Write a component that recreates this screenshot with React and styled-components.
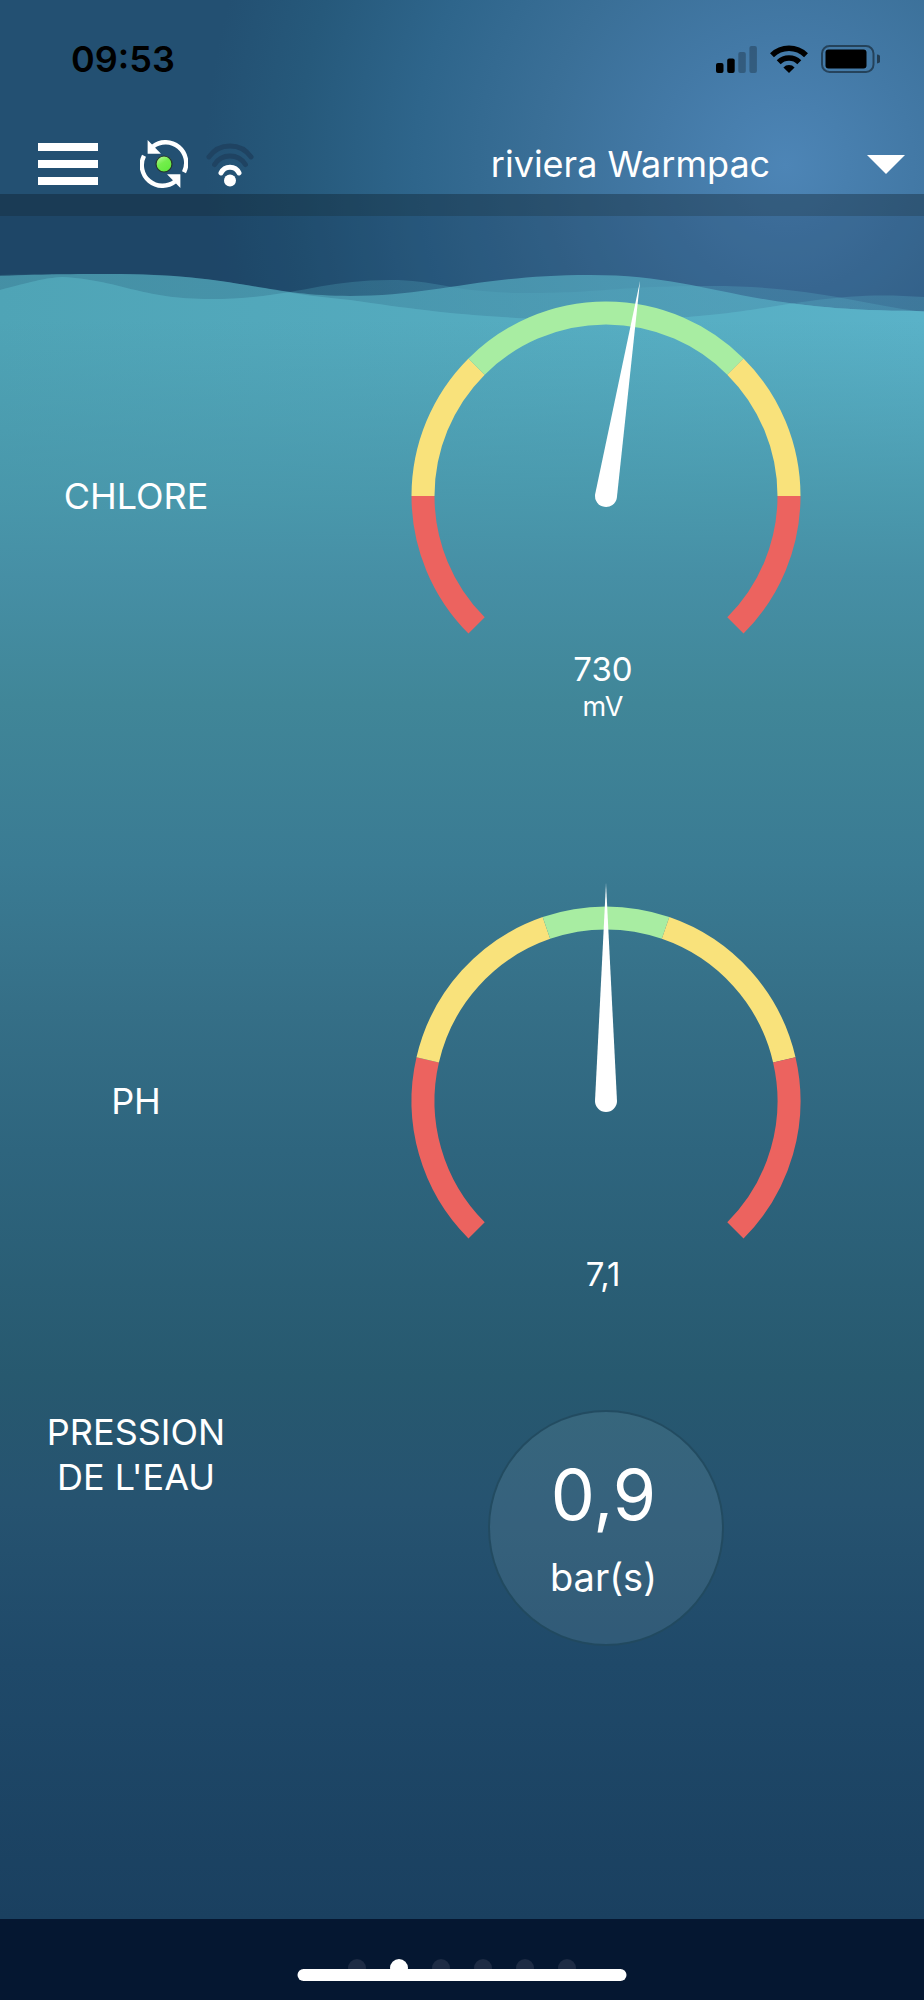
import { useState } from "react";
import styled, { createGlobalStyle } from "styled-components";

const GREEN = "#a8eda2";
const YELLOW = "#f9e27b";
const RED = "#ec635f";

const ARC_RADIUS = 183;

const WAVE_FRONT =
  "M0 2 C50 0 80 0 120 0 C240 1 265 22 350 22 C435 22 480 1 590 1 C710 1 740 38 924 37 V46 H0 Z";
const WAVE_MIDDLE =
  "M0 16 C30 8 45 4 62 3 C120 6 140 25 210 25 C290 25 320 6 390 6 C440 6 450 19 530 19 C600 19 620 12 710 12 C810 12 850 28 924 38 V46 H0 Z";
const WAVE_BACK =
  "M0 1 C60 0 100 0 130 0 C230 2 260 18 350 26 C420 36 460 42 560 46 H640 C730 42 770 32 810 27 C860 20 890 21 924 23 V46 H0 Z";

// angles in degrees, 0 is straight up
const chloreZones = [
  { from: -135, to: -90, color: RED },
  { from: -90, to: -45, color: YELLOW },
  { from: -45, to: 45, color: GREEN },
  { from: 45, to: 90, color: YELLOW },
  { from: 90, to: 135, color: RED },
];

const phZones = [
  { from: -135, to: -77, color: RED },
  { from: -77, to: -19, color: YELLOW },
  { from: -19, to: 19, color: GREEN },
  { from: 19, to: 77, color: YELLOW },
  { from: 77, to: 135, color: RED },
];

function arcPath(from, to) {
  const point = (deg) => {
    const rad = (deg * Math.PI) / 180;
    return `${ARC_RADIUS * Math.sin(rad)} ${-ARC_RADIUS * Math.cos(rad)}`;
  };
  return `M${point(from)} A${ARC_RADIUS} ${ARC_RADIUS} 0 0 1 ${point(to)}`;
}

function Gauge({ label, zones, angle, value, unit, space }) {
  return (
    <Reading $space={space}>
      <GaugeLabel>{label}</GaugeLabel>
      <Measure>
        <GaugeDial viewBox="-218 -218 436 356" aria-hidden="true">
          {zones.map((zone) => (
            <path
              key={zone.from}
              d={arcPath(zone.from, zone.to)}
              fill="none"
              stroke={zone.color}
              strokeWidth="23"
            />
          ))}
          <path
            d="M0 -218 L11 0 A11 11 0 0 1 -11 0 Z"
            fill="#fff"
            transform={`rotate(${angle})`}
          />
        </GaugeDial>
        <GaugeText>
          <GaugeValue>{value}</GaugeValue>
          {unit && <GaugeUnit>{unit}</GaugeUnit>}
        </GaugeText>
      </Measure>
    </Reading>
  );
}

function PhoneStatus() {
  return (
    <StatusBar>
      <Clock>09:53</Clock>
      <StatusIcons>
        <svg width="41" height="27" viewBox="0 0 41 27">
          <rect x="0" y="17" width="7.5" height="10" rx="2" />
          <rect x="11.2" y="12.6" width="7.5" height="14.4" rx="2" />
          <rect x="22.3" y="6" width="7.5" height="21" rx="2" opacity="0.25" />
          <rect x="33.4" y="0" width="7.5" height="27" rx="2" opacity="0.25" />
        </svg>
        <svg width="38" height="28" viewBox="0 0 38 28">
          <g fill="none" stroke="#000" strokeWidth="5.6">
            <path d="M2 10.2 A24.4 24.4 0 0 1 36 10.2" />
            <path d="M8.7 17.2 A14.6 14.6 0 0 1 29.3 17.2" />
          </g>
          <path d="M19 28 L13.4 22.4 A7.9 7.9 0 0 1 24.6 22.4 Z" />
        </svg>
        <svg width="59" height="28" viewBox="0 0 59 28">
          <rect
            x="1"
            y="1"
            width="51.5"
            height="26"
            rx="7.5"
            fill="none"
            stroke="#000"
            strokeOpacity="0.45"
            strokeWidth="2"
          />
          <rect x="4.5" y="4.6" width="41" height="19" rx="3" />
          <path d="M56 9.5 A4.5 4.5 0 0 1 56 18.5 Z" opacity="0.5" />
        </svg>
      </StatusIcons>
    </StatusBar>
  );
}

function SyncIcon() {
  return (
    <svg width="48" height="48" viewBox="-24 -24 48 48" aria-hidden="true">
      <defs>
        <linearGradient id="led" x1="0" y1="0" x2="0.6" y2="1">
          <stop offset="0" stopColor="#c4fba9" />
          <stop offset="0.5" stopColor="#74ee4c" />
          <stop offset="1" stopColor="#62ea3e" />
        </linearGradient>
      </defs>
      {[0, 180].map((turn) => (
        <g key={turn} transform={`rotate(${turn})`}>
          <path
            d="M-11 -17.6 A20.7 20.7 0 0 1 20 8.2"
            fill="none"
            stroke="#fff"
            strokeWidth="4.4"
          />
          <path d="M-16.4 -24 V-10.3 H-3 Z" fill="#fff" />
        </g>
      ))}
      <circle r="8" fill="url(#led)" stroke="#26352f" strokeWidth="1.2" />
    </svg>
  );
}

function SignalIcon() {
  return (
    <svg width="48" height="46" viewBox="-24 -39.5 48 46" aria-hidden="true">
      <g fill="none" strokeWidth="5" strokeLinecap="round">
        <path d="M-21 -23.6 A25.6 25.6 0 0 1 21 -23.6" stroke="#1f4362" />
        <path d="M-15.4 -16 A18.2 18.2 0 0 1 15.4 -16" stroke="#1f4362" />
        <path d="M-9 -7.6 A10 10 0 0 1 9 -7.6" stroke="#fff" />
      </g>
      <circle r="6" fill="#fff" />
    </svg>
  );
}

function Waves() {
  return (
    <WaveStrip viewBox="0 0 924 46" preserveAspectRatio="none" aria-hidden="true">
      <defs>
        <linearGradient id="surface" x1="0" x2="1">
          <stop offset="0" stopColor="#4fa4b6" />
          <stop offset="1" stopColor="#5ab2c8" />
        </linearGradient>
        <clipPath id="clip-front">
          <path d={WAVE_FRONT} />
        </clipPath>
        <clipPath id="clip-middle">
          <path d={WAVE_MIDDLE} />
        </clipPath>
      </defs>
      <path d={WAVE_BACK} fill="url(#surface)" opacity="0.28" />
      <path d={WAVE_MIDDLE} fill="url(#surface)" opacity="0.28" />
      <path d={WAVE_FRONT} fill="url(#surface)" opacity="0.7" />
      <g clipPath="url(#clip-front)">
        <g clipPath="url(#clip-middle)">
          <path d={WAVE_BACK} fill="url(#surface)" />
        </g>
      </g>
    </WaveStrip>
  );
}

export default function App() {
  const [page, setPage] = useState(1);

  return (
    <>
      <GlobalStyle />
      <Screen>
        <PhoneStatus />
        <Toolbar>
          <MenuButton aria-label="Menu">
            <MenuBar />
            <MenuBar />
            <MenuBar />
          </MenuButton>
          <StateIcons>
            <SyncIcon />
            <SignalIcon />
          </StateIcons>
          <Picker>
            <PoolSelect aria-label="Piscine" defaultValue="riviera">
              <option value="riviera">riviera Warmpac</option>
            </PoolSelect>
            <Caret viewBox="0 0 38 19" aria-hidden="true">
              <path d="M0 0 H38 L19 19 Z" fill="#fff" />
            </Caret>
          </Picker>
        </Toolbar>
        <Shade />
        <Pool>
          <Backdrop>
            <Waves />
            <Water />
          </Backdrop>
          <Readings>
            <Gauge
              label="CHLORE"
              zones={chloreZones}
              angle={9}
              value="730"
              unit="mV"
              space={158}
            />
            <Gauge label="PH" zones={phZones} angle={0} value="7,1" space={80} />
            <Reading $space={0}>
              <Label>
                PRESSION
                <br />
                DE L'EAU
              </Label>
              <Measure>
                <Bubble>
                  <BubbleValue>0,9</BubbleValue>
                  <BubbleUnit>bar(s)</BubbleUnit>
                </Bubble>
              </Measure>
            </Reading>
          </Readings>
        </Pool>
        <Footer>
          <Dots>
            {[0, 1, 2, 3, 4, 5].map((index) => (
              <Dot
                key={index}
                $active={index === page}
                aria-label={`Page ${index + 1}`}
                onClick={() => setPage(index)}
              />
            ))}
          </Dots>
          <HomeBar />
        </Footer>
      </Screen>
    </>
  );
}

const GlobalStyle = createGlobalStyle`
  body {
    margin: 0;
    background: #051731;
  }

  * {
    box-sizing: border-box;
  }

  svg {
    display: block;
    flex-shrink: 0;
  }
`;

const Screen = styled.div`
  min-height: 100vh;
  display: flex;
  flex-direction: column;
  color: #fff;
  font-family: Inter, "Liberation Sans", sans-serif;
  background: radial-gradient(
    circle 580px at 85% 165px,
    #4d85b6 0%,
    #4379a6 22%,
    #3a6f97 42%,
    #2e658b 64%,
    #26597b 84%,
    #235072 100%
  );
`;

const StatusBar = styled.div`
  height: 118px;
  padding: 0 44px 0 71px;
  display: flex;
  align-items: center;
  justify-content: space-between;
  color: #000;
`;

const Clock = styled.span`
  font-size: 36px;
  font-weight: 600;
`;

const StatusIcons = styled.div`
  display: flex;
  align-items: center;
  gap: 13px;
`;

const Toolbar = styled.header`
  height: 76px;
  padding: 16px 19px 0 38px;
  display: flex;
  align-items: center;
`;

const MenuButton = styled.button`
  width: 60px;
  margin-right: 42px;
  padding: 0;
  border: 0;
  background: none;
  display: flex;
  flex-direction: column;
  gap: 9px;
  cursor: pointer;
`;

const MenuBar = styled.span`
  height: 8px;
  background: #fff;
`;

const StateIcons = styled.div`
  display: flex;
  align-items: center;
  gap: 18px;
`;

const Picker = styled.div`
  flex: 1;
  margin-left: 102px;
  display: grid;
  align-items: center;
`;

const PoolSelect = styled.select`
  grid-area: 1 / 1;
  width: 100%;
  padding: 0;
  border: 0;
  appearance: none;
  background: none;
  color: #fff;
  font: inherit;
  font-size: 36px;
  line-height: 48px;
  text-align: center;
  text-align-last: center;
`;

const Caret = styled.svg`
  grid-area: 1 / 1;
  justify-self: end;
  width: 38px;
  pointer-events: none;
`;

const Shade = styled.div`
  height: 22px;
  background: rgba(10, 20, 30, 0.34);
`;

const Pool = styled.main`
  flex: 1;
  display: grid;
  background: rgba(10, 30, 60, 0.2);
`;

const Backdrop = styled.div`
  grid-area: 1 / 1;
  padding-top: 58px;
  display: flex;
  flex-direction: column;
`;

const WaveStrip = styled.svg`
  width: 100%;
  height: 46px;
`;

const Water = styled.div`
  flex: 1;
  background:
    linear-gradient(
      to bottom,
      rgba(70, 147, 168, 0) 0%,
      rgba(71, 148, 168, 0.8) 11%,
      #468fa5 16%,
      #408698 24%,
      #3a7b93 34%,
      #356f87 43%,
      #2e657e 52%,
      #27596f 66%,
      #265370 74%,
      #1f4969 84%,
      #1a4060 100%
    ),
    linear-gradient(to right, #4fa4b6, #5ab2c8);
`;

const Readings = styled.div`
  grid-area: 1 / 1;
  padding-top: 62px;
`;

const Reading = styled.section`
  display: grid;
  grid-template-columns: 272px 1fr;
  align-items: start;
  margin-bottom: ${(props) => props.$space}px;
`;

const Label = styled.h2`
  margin: 0;
  font-size: 36px;
  font-weight: 400;
  line-height: 45px;
  text-align: center;
`;

const GaugeLabel = styled(Label)`
  height: 436px;
  display: flex;
  align-items: center;
  justify-content: center;
`;

const Measure = styled.div`
  padding-left: 15px;
  display: flex;
  flex-direction: column;
  align-items: center;
`;

const GaugeDial = styled.svg`
  width: 436px;
`;

const GaugeText = styled.div`
  min-height: 91px;
  padding: 15px 5px 0 0;
  text-align: center;
`;

const GaugeValue = styled.div`
  font-size: 33px;
  line-height: 40px;
`;

const GaugeUnit = styled.div`
  font-size: 27px;
  line-height: 36px;
`;

const Bubble = styled.div`
  width: 236px;
  height: 236px;
  padding: 14px 4px 0 0;
  border: 2px solid rgba(30, 70, 90, 0.8);
  border-radius: 50%;
  display: flex;
  flex-direction: column;
  align-items: center;
  justify-content: center;
  background: rgba(140, 180, 190, 0.16);
`;

const BubbleValue = styled.div`
  font-size: 70px;
  line-height: 84px;
`;

const BubbleUnit = styled.div`
  font-size: 38px;
  line-height: 80px;
`;

const Footer = styled.footer`
  position: relative;
  height: 81px;
  padding-top: 40px;
  background: #051731;
`;

const Dots = styled.nav`
  display: flex;
  justify-content: center;
  gap: 24px;
`;

const Dot = styled.button`
  width: 18px;
  height: 18px;
  padding: 0;
  border: 0;
  border-radius: 50%;
  background: ${(props) => (props.$active ? "#fff" : "#1e2c45")};
  cursor: pointer;
`;

const HomeBar = styled.div`
  position: absolute;
  left: 50%;
  bottom: 19px;
  width: 329px;
  height: 12px;
  border-radius: 6px;
  background: #fff;
  transform: translateX(-50%);
`;
